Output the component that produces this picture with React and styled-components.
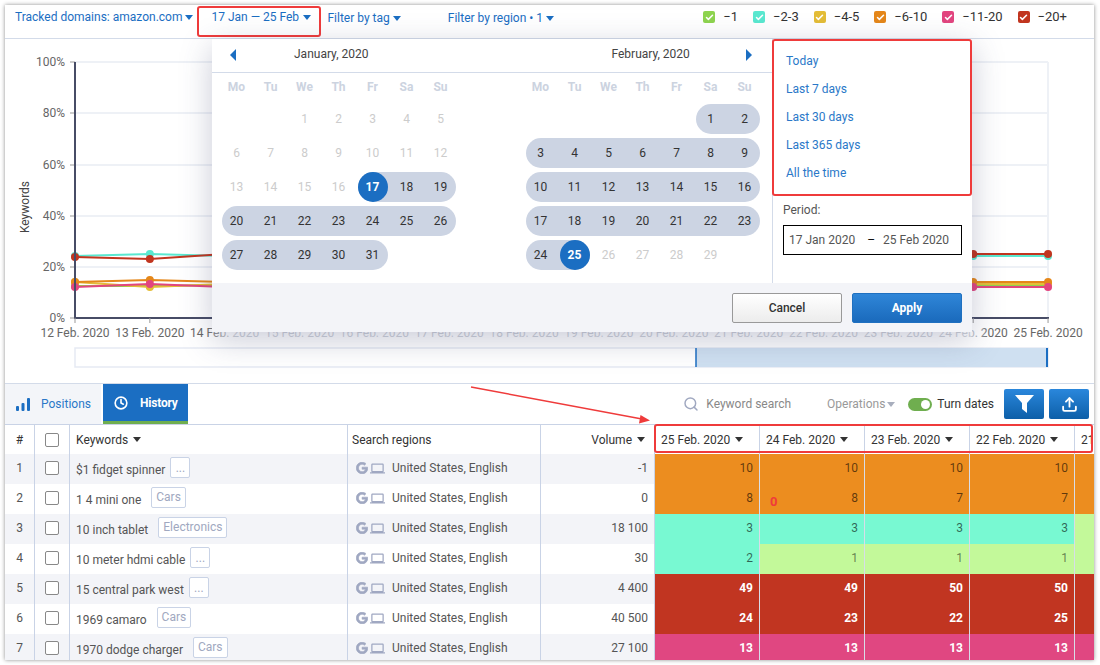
import React from "react"
import styled, { createGlobalStyle } from "styled-components"
import { Check, Clock, Search, Upload } from "lucide-react"
import { FaGoogle } from "react-icons/fa"
import { MdLaptop } from "react-icons/md"

const colors = {
  blue: "#1b6ec2",
  link: "#2a78c8",
  line: "#c9d3e6",
  stripe: "#f3f4f8",
  red: "#ef3b3b",
}

const GlobalStyle = createGlobalStyle`
  html, body {
    margin: 0;
    height: 100%;
    overflow: hidden;
    background: #fff;
  }
  body {
    font-family: Roboto, "Liberation Sans", sans-serif;
    font-size: 12px;
    color: #444;
  }
`

const Card = styled.div`
  position: relative;
  width: 1089px;
  height: 655px;
  margin: 5px 0 0 5px;
  overflow: hidden;
  background: #fff;
  box-shadow: 0 0 4px rgba(0, 0, 0, 0.45);
`

const Caret = styled.i`
  display: inline-block;
  flex: none;
  width: 0;
  height: 0;
  border-left: ${props => props.$size || 4}px solid transparent;
  border-right: ${props => props.$size || 4}px solid transparent;
  border-top: 5px solid ${props => props.$color || "#333"};
`

/* top filters */

const TopBar = styled.div`
  display: flex;
  align-items: flex-start;
  height: 34px;
  padding: 0 27px 0 10px;
  box-sizing: border-box;
  border-bottom: 1px solid #d3dbe9;
`

const Filter = styled.div`
  display: flex;
  align-items: center;
  gap: 3px;
  margin-left: ${props => props.$left || 0}px;
  margin-top: ${props => props.$top || 0}px;
  line-height: 24px;
  font-size: 12px;
  color: ${colors.blue};
  white-space: nowrap;
`

const DateFilter = styled(Filter)`
  box-sizing: border-box;
  width: 124px;
  height: 31px;
  align-items: flex-start;
  gap: 4px;
  padding-left: 12px;
  border: 2px solid ${colors.red};
  border-radius: 3px;
  line-height: 18px;

  ${Caret} {
    margin-top: 7px;
  }
`

const Legend = styled.div`
  display: flex;
  gap: 15px;
  margin-left: auto;
  line-height: 24px;
  font-size: 13px;
  color: #333;
`

const LegendItem = styled.div`
  display: flex;
  align-items: center;
  gap: 8px;
`

const LegendBox = styled.span`
  display: flex;
  align-items: center;
  justify-content: center;
  width: 12px;
  height: 12px;
  border-radius: 2px;
  background: ${props => props.$color};
  color: #fff;
`

/* chart */

const ChartArea = styled.div`
  height: 345px;
  border-bottom: 1px solid #d3dbe9;
  box-sizing: border-box;

  svg {
    display: block;
  }
`

/* date popover */

const Popover = styled.div`
  position: absolute;
  left: 207px;
  top: 34px;
  width: 760px;
  background: #fff;
  box-shadow: 0 8px 30px rgba(60, 70, 110, 0.28);
`

const PopoverBody = styled.div`
  display: flex;
  height: 244px;
`

const Calendars = styled.div`
  width: 560px;
`

const MonthHeader = styled.div`
  display: flex;
  align-items: center;
  height: 34px;
  padding: 0 18px 2px 18px;
  box-sizing: border-box;
  border-bottom: 1px solid #d3dbe9;
  color: #444;
`

const MonthTitle = styled.span`
  margin-left: ${props => props.$left}px;
  margin-right: ${props => props.$right || 0}px;
  margin-top: -2px;
`

const Arrow = styled.i`
  flex: none;
  width: 0;
  height: 0;
  border-top: 6px solid transparent;
  border-bottom: 6px solid transparent;
  ${props => props.$right
    ? `border-left: 6px solid ${colors.blue};`
    : `border-right: 6px solid ${colors.blue};`}
`

const Months = styled.div`
  display: flex;
  gap: 66px;
  padding-left: 7.5px;
`

const MonthGrid = styled.div`
  display: grid;
  grid-template-columns: repeat(7, 34px);
  grid-auto-rows: 34px;
  grid-template-rows: 29px;
`

const Weekday = styled.div`
  display: flex;
  align-items: center;
  justify-content: center;
  padding-bottom: 2px;
  font-weight: 700;
  color: #ccd3df;
`

const DayCell = styled.div`
  display: flex;
  align-items: center;
`

const DayBand = styled.div`
  display: flex;
  flex: 1;
  height: 30px;
  justify-content: ${props => props.$start ? "flex-start" : props.$end ? "flex-end" : "center"};
  margin-left: ${props => props.$start ? 2 : 0}px;
  margin-right: ${props => props.$end ? 2 : 0}px;
  border-radius: ${props => props.$start ? 15 : 0}px ${props => props.$end ? 15 : 0}px ${props => props.$end ? 15 : 0}px ${props => props.$start ? 15 : 0}px;
  background: ${props => props.$range ? "#ccd4e3" : "transparent"};
`

const DayNumber = styled.span`
  display: flex;
  align-items: center;
  justify-content: center;
  width: 30px;
  height: 30px;
  border-radius: 50%;
  color: ${props => props.$selected ? "#fff" : props.$range ? "#333" : "#ccc"};
  background: ${props => props.$selected ? colors.blue : "transparent"};
  font-weight: ${props => props.$selected ? 700 : 400};
`

const Sidebar = styled.div`
  width: 200px;
  box-sizing: border-box;
  border-left: 1px solid #d3dbe9;
`

const Presets = styled.ul`
  box-sizing: border-box;
  width: 200px;
  height: 157px;
  margin: 0 0 0 -1px;
  padding: 6px 12px 0;
  list-style: none;
  border: 2px solid ${colors.red};
  border-radius: 3px;
`

const Preset = styled.li`
  line-height: 28px;
  color: ${colors.link};
`

const PeriodLabel = styled.div`
  margin: 6px 0 7px 10px;
  line-height: 16px;
  color: #555;
`

const PeriodInput = styled.div`
  display: flex;
  align-items: center;
  box-sizing: border-box;
  width: 179px;
  height: 30px;
  margin-left: 10px;
  padding-left: 5px;
  border: 1px solid #000;
  color: #555;
`

const PeriodDash = styled.span`
  margin: 0 8px 0 12px;
  color: #111;
`

const PopoverFooter = styled.div`
  display: flex;
  justify-content: flex-end;
  gap: 10px;
  padding: 10px 10px 9px;
  background: ${colors.stripe};
`

const FooterButton = styled.button`
  width: 110px;
  height: 30px;
  padding: 0;
  border-radius: 2px;
  font-family: inherit;
  font-size: 12px;
  font-weight: ${props => props.$primary ? 700 : 500};
  color: ${props => props.$primary ? "#fff" : "#333"};
  border: 1px solid ${props => props.$primary ? "#1f70c0" : "#999"};
  background: ${props => props.$primary
    ? "linear-gradient(#2f86d8, #1a6abc)"
    : "linear-gradient(#fff, #ececec)"};
`

/* tabs and tools */

const Toolbar = styled.div`
  display: flex;
  align-items: stretch;
  height: 40px;
  padding-right: 5px;
`

const Tab = styled.div`
  display: flex;
  align-items: center;
  box-sizing: border-box;
  width: ${props => props.$active ? 85 : 96}px;
  gap: ${props => props.$active ? 12 : 11}px;
  margin-left: ${props => props.$active ? 2 : 0}px;
  padding-left: 11px;
  color: ${props => props.$active ? "#fff" : colors.link};
  font-weight: ${props => props.$active ? 700 : 400};
  letter-spacing: ${props => props.$active ? -0.2 : 0}px;
  background: ${props => props.$active ? colors.blue : "#f3f5f9"};
  border-bottom: ${props => props.$active ? "3px solid #6fae4f" : "none"};
`

const Tools = styled.div`
  display: flex;
  align-items: center;
  margin-left: auto;
`

const SearchBox = styled.div`
  display: flex;
  align-items: center;
  gap: 7px;
  color: #888;
`

const Operations = styled.div`
  display: flex;
  align-items: center;
  gap: 2px;
  margin-left: 36px;
  color: #999;
`

const Toggle = styled.span`
  display: flex;
  align-items: center;
  justify-content: flex-end;
  box-sizing: border-box;
  width: 24px;
  height: 13px;
  margin-left: 13px;
  padding-right: 2px;
  border-radius: 7px;
  background: #6fae4f;

  &::after {
    content: "";
    width: 9px;
    height: 9px;
    border-radius: 50%;
    background: #fff;
  }
`

const ToggleLabel = styled.span`
  margin-left: 5px;
  color: #333;
`

const ToolButton = styled.button`
  display: flex;
  align-items: center;
  justify-content: center;
  width: 40px;
  height: 30px;
  margin-left: ${props => props.$left}px;
  padding: 0;
  border: none;
  border-radius: 2px;
  color: #fff;
  background: linear-gradient(#2a87dc, #0d5fa8);
`

/* table */

const Table = styled.div`
  position: relative;
  border-top: 1px solid ${colors.line};
`

const columns = "30px 35px 278px 193px 114px repeat(5, 105px)"

const Row = styled.div`
  display: grid;
  grid-template-columns: ${columns};
  height: ${props => props.$head ? 29 : 30}px;
  overflow: hidden;
  background: ${props => props.$striped ? colors.stripe : "#fff"};
`

const Cell = styled.div`
  display: flex;
  align-items: center;
  justify-content: ${props => props.$align || "flex-start"};
  gap: ${props => props.$gap || 0}px;
  box-sizing: border-box;
  padding: 0 ${props => props.$pr || 0}px ${props => props.$head ? 0 : 2}px ${props => props.$pl || 0}px;
  border-right: 1px solid ${colors.line};
  white-space: nowrap;
  color: ${props => props.$head ? "#333" : "#555"};
`

const KeywordText = styled.span`
  margin-top: 3px;
  color: #555;
`

const Tag = styled.span`
  display: flex;
  align-items: center;
  justify-content: center;
  box-sizing: border-box;
  min-width: 20px;
  height: 21px;
  margin-top: -1px;
  margin-left: ${props => props.$dots ? 5 : 10}px;
  padding: 0 ${props => props.$dots ? 0 : 4}px ${props => props.$dots ? 0 : 2}px;
  border: 1px solid ${colors.line};
  border-radius: 2px;
  color: #a0a8c0;
  background: #fff;
`

const Checkbox = styled.span`
  box-sizing: border-box;
  width: 14px;
  height: 14px;
  border: 1px solid #888;
  border-radius: 2px;
  background: #fff;
`

const RegionIcons = styled.span`
  display: flex;
  align-items: center;
  gap: 2px;
  margin-right: 7px;
  color: #a0a8c2;

  svg:first-child path {
    stroke: currentColor;
    stroke-width: 28px;
  }
`

const HeatCell = styled.div`
  position: relative;
  display: flex;
  align-items: center;
  justify-content: flex-end;
  box-sizing: border-box;
  padding: 0 6px 3px 0;
  border-right: 1px solid #d8dde8;
  font-size: 12px;
  font-weight: ${props => props.$bold ? 700 : 400};
  color: ${props => props.$text};
  background: ${props => props.$bg};
`

const ZeroMark = styled.span`
  position: absolute;
  left: 10px;
  top: 10px;
  font-weight: 700;
  font-size: 13px;
  color: ${colors.red};
`

const HeaderMark = styled.div`
  position: absolute;
  left: 649px;
  top: -1px;
  width: 439px;
  height: 29px;
  box-sizing: border-box;
  border: 2px solid ${colors.red};
  border-radius: 3px;
  pointer-events: none;
`

const PointerArrow = styled.svg`
  position: absolute;
  left: 461px;
  top: 378px;
`

const toX = i => 75 + i * 74.85

const chartDates = Array.from({ length: 14 }, (_, i) => `${12 + i} Feb. 2020`)

const gridY = [
  { y: 62, label: "100%" },
  { y: 113, label: "80%" },
  { y: 165, label: "60%" },
  { y: 216, label: "40%" },
  { y: 267, label: "20%" },
  { y: 318, label: "0%" },
]

const series = [
  { color: "#8ed44f", first: 286, second: 286, rest: 285 },
  { color: "#5ae8d0", first: 256, second: 254, rest: 256 },
  { color: "#e4bd37", first: 282, second: 287, rest: 284 },
  { color: "#e5871a", first: 282, second: 280, rest: 282 },
  { color: "#e2457f", first: 287, second: 284, rest: 287 },
  { color: "#c1351f", first: 257, second: 259, rest: 254 },
]

const Chart = () => (
  <svg width="1089" height="344" viewBox="5 39 1089 344" fontFamily="Roboto, sans-serif" fontSize="12">
    <defs>
      <linearGradient id="labelFade" gradientUnits="userSpaceOnUse" x1="75" x2="1048" y1="0" y2="0">
        <stop offset="0.135" stopColor="#666" />
        <stop offset="0.16" stopColor="#cfd2d9" />
        <stop offset="0.92" stopColor="#cfd2d9" />
        <stop offset="0.94" stopColor="#666" />
      </linearGradient>
    </defs>
    {gridY.map(g => (
      <g key={g.y}>
        <line x1="75" x2="1048" y1={g.y} y2={g.y} stroke="#eef1f6" strokeWidth="2" />
        <line x1="70" x2="75" y1={g.y} y2={g.y} stroke="#999" />
        <text x="65" y={g.y + 4} textAnchor="end" fill="#666">{g.label}</text>
      </g>
    ))}
    <line x1="1048" x2="1048" y1="62" y2="318" stroke="#eef1f6" strokeWidth="2" />
    <text transform="translate(29 207) rotate(-90)" textAnchor="middle" fill="#444">Keywords</text>
    {series.map(s => {
      const ys = chartDates.map((_, i) => (i === 0 ? s.first : i === 1 ? s.second : s.rest))
      return (
        <g key={s.color}>
          <polyline
            points={ys.map((y, i) => `${toX(i)},${y}`).join(" ")}
            fill="none"
            stroke={s.color}
            strokeWidth="2"
          />
          {ys.map((y, i) => <circle key={i} cx={toX(i)} cy={y} r="4" fill={s.color} />)}
        </g>
      )
    })}
    <line x1="75" x2="75" y1="62" y2="319" stroke="#474c66" strokeWidth="2" />
    <line x1="74" x2="1049" y1="318" y2="318" stroke="#474c66" strokeWidth="2" />
    <g fill="url(#labelFade)">
      {chartDates.map((d, i) => (
        <text key={d} x={toX(i)} y="337" textAnchor="middle">{d}</text>
      ))}
    </g>
    {chartDates.map((d, i) => (
      <line key={d} x1={toX(i)} x2={toX(i)} y1="318" y2="323" stroke="#999" />
    ))}
    <rect x="75" y="348" width="973" height="19" fill="#fff" stroke="#e6eaf3" strokeWidth="1.5" />
    <rect x="696" y="348" width="352" height="19" fill="#cfe0f1" />
    <line x1="696" x2="696" y1="348" y2="367" stroke={colors.blue} strokeWidth="1.5" />
    <line x1="1047" x2="1047" y1="348" y2="367" stroke={colors.blue} strokeWidth="2" />
  </svg>
)

const weekdays = ["Mo", "Tu", "We", "Th", "Fr", "Sa", "Su"]

const Month = ({ offset, total, from, to, selected }) => (
  <MonthGrid>
    {weekdays.map(d => <Weekday key={d}>{d}</Weekday>)}
    {Array.from({ length: offset }, (_, i) => <DayCell key={`gap${i}`} />)}
    {Array.from({ length: total }, (_, i) => {
      const day = i + 1
      const col = (offset + i) % 7
      const range = day >= from && day <= to
      const start = range && (col === 0 || day === from)
      const end = range && (col === 6 || day === to)
      return (
        <DayCell key={day}>
          <DayBand $range={range} $start={start} $end={end}>
            <DayNumber $range={range} $selected={day === selected}>{day}</DayNumber>
          </DayBand>
        </DayCell>
      )
    })}
  </MonthGrid>
)

const DatePopover = () => (
  <Popover>
    <PopoverBody>
      <Calendars>
        <MonthHeader>
          <Arrow />
          <MonthTitle $left={58}>January, 2020</MonthTitle>
          <MonthTitle $left={243} $right={56}>February, 2020</MonthTitle>
          <Arrow $right />
        </MonthHeader>
        <Months>
          <Month offset={2} total={31} from={17} to={31} selected={17} />
          <Month offset={5} total={29} from={1} to={25} selected={25} />
        </Months>
      </Calendars>
      <Sidebar>
        <Presets>
          {["Today", "Last 7 days", "Last 30 days", "Last 365 days", "All the time"].map(p => (
            <Preset key={p}>{p}</Preset>
          ))}
        </Presets>
        <PeriodLabel>Period:</PeriodLabel>
        <PeriodInput>
          <span>17 Jan 2020</span>
          <PeriodDash>–</PeriodDash>
          <span>25 Feb 2020</span>
        </PeriodInput>
      </Sidebar>
    </PopoverBody>
    <PopoverFooter>
      <FooterButton>Cancel</FooterButton>
      <FooterButton $primary>Apply</FooterButton>
    </PopoverFooter>
  </Popover>
)

const legend = [
  { label: "−1", color: "#8ed44f" },
  { label: "−2-3", color: "#5ae8d0" },
  { label: "−4-5", color: "#e4bd37" },
  { label: "−6-10", color: "#e5871a" },
  { label: "−11-20", color: "#e2457f" },
  { label: "−20+", color: "#c1351f" },
]

const heat = {
  orange: { bg: "#ec8d1f", text: "rgba(0,0,0,.6)" },
  cyan: { bg: "#78f9d2", text: "rgba(0,0,0,.6)" },
  lime: { bg: "#c3f99a", text: "rgba(0,0,0,.5)" },
  red: { bg: "#c13521", text: "#fff", bold: true },
  pink: { bg: "#e04781", text: "#fff", bold: true },
}

const rows = [
  { keyword: "$1 fidget spinner", tag: "...", volume: "-1", cells: [[10, "orange"], [10, "orange"], [10, "orange"], [10, "orange"], [10, "orange"]] },
  { keyword: "1 4 mini one", tag: "Cars", volume: "0", cells: [[8, "orange"], [8, "orange"], [7, "orange"], [7, "orange"], [7, "orange"]] },
  { keyword: "10 inch tablet", tag: "Electronics", volume: "18 100", cells: [[3, "cyan"], [3, "cyan"], [3, "cyan"], [3, "cyan"], [1, "lime"]] },
  { keyword: "10 meter hdmi cable", tag: "...", volume: "30", cells: [[2, "cyan"], [1, "lime"], [1, "lime"], [1, "lime"], [1, "lime"]] },
  { keyword: "15 central park west", tag: "...", volume: "4 400", cells: [[49, "red"], [49, "red"], [50, "red"], [50, "red"], [50, "red"]] },
  { keyword: "1969 camaro", tag: "Cars", volume: "40 500", cells: [[24, "red"], [23, "red"], [22, "red"], [25, "red"], [25, "red"]] },
  { keyword: "1970 dodge charger", tag: "Cars", volume: "27 100", cells: [[13, "pink"], [13, "pink"], [13, "pink"], [13, "pink"], [13, "pink"]] },
]

const headDates = ["25 Feb. 2020", "24 Feb. 2020", "23 Feb. 2020", "22 Feb. 2020", "21 Feb. 2020"]

const App = () => (
  <Card>
    <GlobalStyle />
    <TopBar>
      <Filter>Tracked domains: amazon.com<Caret $size={4.5} $color={colors.blue} /></Filter>
      <DateFilter $left={4} $top={1}>17 Jan — 25 Feb<Caret $size={4.5} $color={colors.blue} /></DateFilter>
      <Filter $left={6} $top={1}>Filter by tag<Caret $size={4.5} $color={colors.blue} /></Filter>
      <Filter $left={47} $top={1}>Filter by region • 1<Caret $size={4.5} $color={colors.blue} /></Filter>
      <Legend>
        {legend.map(l => (
          <LegendItem key={l.label}>
            <LegendBox $color={l.color}><Check size={9} strokeWidth={4} /></LegendBox>
            {l.label}
          </LegendItem>
        ))}
      </Legend>
    </TopBar>
    <ChartArea>
      <Chart />
    </ChartArea>
    <Toolbar>
      <Tab>
        <svg width="14" height="13" viewBox="0 0 14 13" fill={colors.blue}>
          <rect x="0" y="8" width="3" height="5" rx="1" />
          <rect x="5.5" y="5" width="3" height="8" rx="1" />
          <rect x="11" y="0" width="3" height="13" rx="1" />
        </svg>
        Positions
      </Tab>
      <Tab $active>
        <Clock size={14} strokeWidth={2.8} />
        History
      </Tab>
      <Tools>
        <SearchBox>
          <Search size={16} color="#a0a8c0" strokeWidth={2.2} />
          Keyword search
        </SearchBox>
        <Operations>Operations<Caret $color="#a8aebd" /></Operations>
        <Toggle />
        <ToggleLabel>Turn dates</ToggleLabel>
        <ToolButton $left={10}>
          <svg width="19" height="18" viewBox="0 0 19 18" fill="currentColor">
            <path d="M0 0H19L12 8V18L7 14V8Z" />
          </svg>
        </ToolButton>
        <ToolButton $left={5}><Upload size={17} strokeWidth={2.6} /></ToolButton>
      </Tools>
    </Toolbar>
    <Table>
      <Row $head>
        <Cell $head $align="center">#</Cell>
        <Cell $head $align="center"><Checkbox /></Cell>
        <Cell $head $pl={6} $gap={5}>Keywords<Caret /></Cell>
        <Cell $head $pl={4}>Search regions</Cell>
        <Cell $head $align="flex-end" $pr={9} $gap={5}>Volume<Caret /></Cell>
        {headDates.map(d => (
          <Cell key={d} $head $pl={6} $gap={5}>{d}<Caret /></Cell>
        ))}
      </Row>
      {rows.map((r, i) => (
        <Row key={r.keyword} $striped={i % 2 === 0}>
          <Cell $align="center">{i + 1}</Cell>
          <Cell $align="center"><Checkbox /></Cell>
          <Cell $pl={6}>
            <KeywordText>{r.keyword}</KeywordText>
            <Tag $dots={r.tag === "..."}>{r.tag}</Tag>
          </Cell>
          <Cell $pl={8}>
            <RegionIcons>
              <FaGoogle size={12} />
              <MdLaptop size={15} />
            </RegionIcons>
            United States, English
          </Cell>
          <Cell $align="flex-end" $pr={6}>{r.volume}</Cell>
          {r.cells.map(([value, tone], j) => (
            <HeatCell key={j} $bg={heat[tone].bg} $text={heat[tone].text} $bold={heat[tone].bold}>
              {i === 1 && j === 1 && <ZeroMark>0</ZeroMark>}
              {value}
            </HeatCell>
          ))}
        </Row>
      ))}
      <HeaderMark />
    </Table>
    <DatePopover />
    <PointerArrow width="190" height="44" viewBox="0 0 190 44">
      <line x1="5" y1="4" x2="176" y2="36" stroke={colors.red} strokeWidth="1.5" />
      <polygon points="184,37.5 173,40.5 174.5,32" fill={colors.red} />
    </PointerArrow>
  </Card>
)

export default App
